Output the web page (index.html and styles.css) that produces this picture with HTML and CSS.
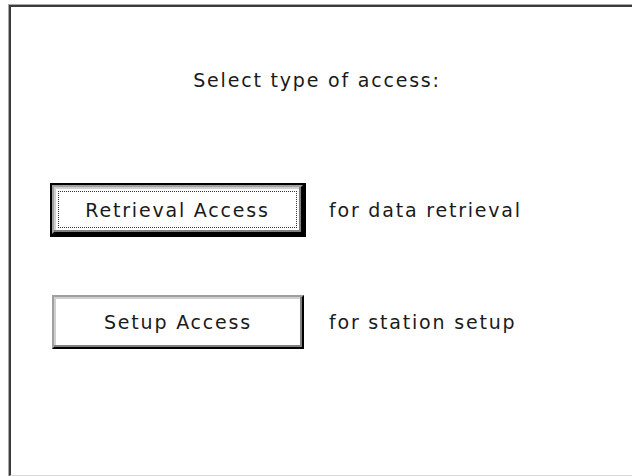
FILE: index.html
```html
<!DOCTYPE html>
<html lang="en">
<head>
    <meta charset="UTF-8">
    <meta name="viewport" content="width=device-width, initial-scale=1.0">
    <title>Access</title>
    <link rel="stylesheet" href="styles.css">
</head>
<body>
    <section id="frame">
        <section id="panel">
            <p class="title">Select type of access:</p>
            <div class="row first">
                <div class="defaultwrap">
                    <button class="btn"><span class="focus">Retrieval Access</span></button>
                </div>
                <span class="label">for data retrieval</span>
            </div>
            <div class="row second">
                <button class="btn plain">Setup Access</button>
                <span class="label">for station setup</span>
            </div>
        </section>
    </section>
</body>
</html>
```
FILE: styles.css
```css
*{
    padding:0;
    margin:0;
    box-sizing: border-box;
}
body{
    background:#fff;
    font-family:"DejaVu Sans", sans-serif;
    font-size:19px;
    letter-spacing:1.8px;
    color:#1a1a1a;
    overflow:hidden;
}
#frame{
    margin:4px 0 0 8px;
    width:640px;
    height:472px;
    border-top:1px solid #a8a8a8;
    border-left:1px solid #a8a8a8;
}
#panel{
    height:100%;
    border-top:2px solid #3c3c3c;
    border-left:2px solid #3c3c3c;
    border-bottom:1px solid #d8d8d8;
    padding:62px 0 0 39px;
}
.title{
    width:612px;
    text-align:center;
    line-height:22px;
    margin-left:-39px;
}
.row{
    display:flex;
    align-items:center;
}
.row.first{
    margin-top:92px;
}
.row.second{
    margin-top:58px;
    padding-left:2px;
}
.label{
    margin-left:23px;
}
.row.second .label{
    margin-left:25px;
}
.defaultwrap{
    border:2px solid #000;
    border-right-width:3px;
    border-bottom-width:3px;
}
.btn{
    font:inherit;
    letter-spacing:inherit;
    color:inherit;
    background:#fff;
    width:251px;
    height:49px;
    border:2px solid;
    border-color:#a0a0a0 #000 #000 #a0a0a0;
    box-shadow:inset -2px -2px #808080, inset 2px 2px #d0d0d0;
    display:flex;
    align-items:center;
    justify-content:center;
    padding:4px;
}
.btn.plain{
    width:252px;
    height:54px;
}
.focus{
    flex:1;
    align-self:stretch;
    display:flex;
    align-items:center;
    justify-content:center;
    border:1px dotted #333;
}
```
